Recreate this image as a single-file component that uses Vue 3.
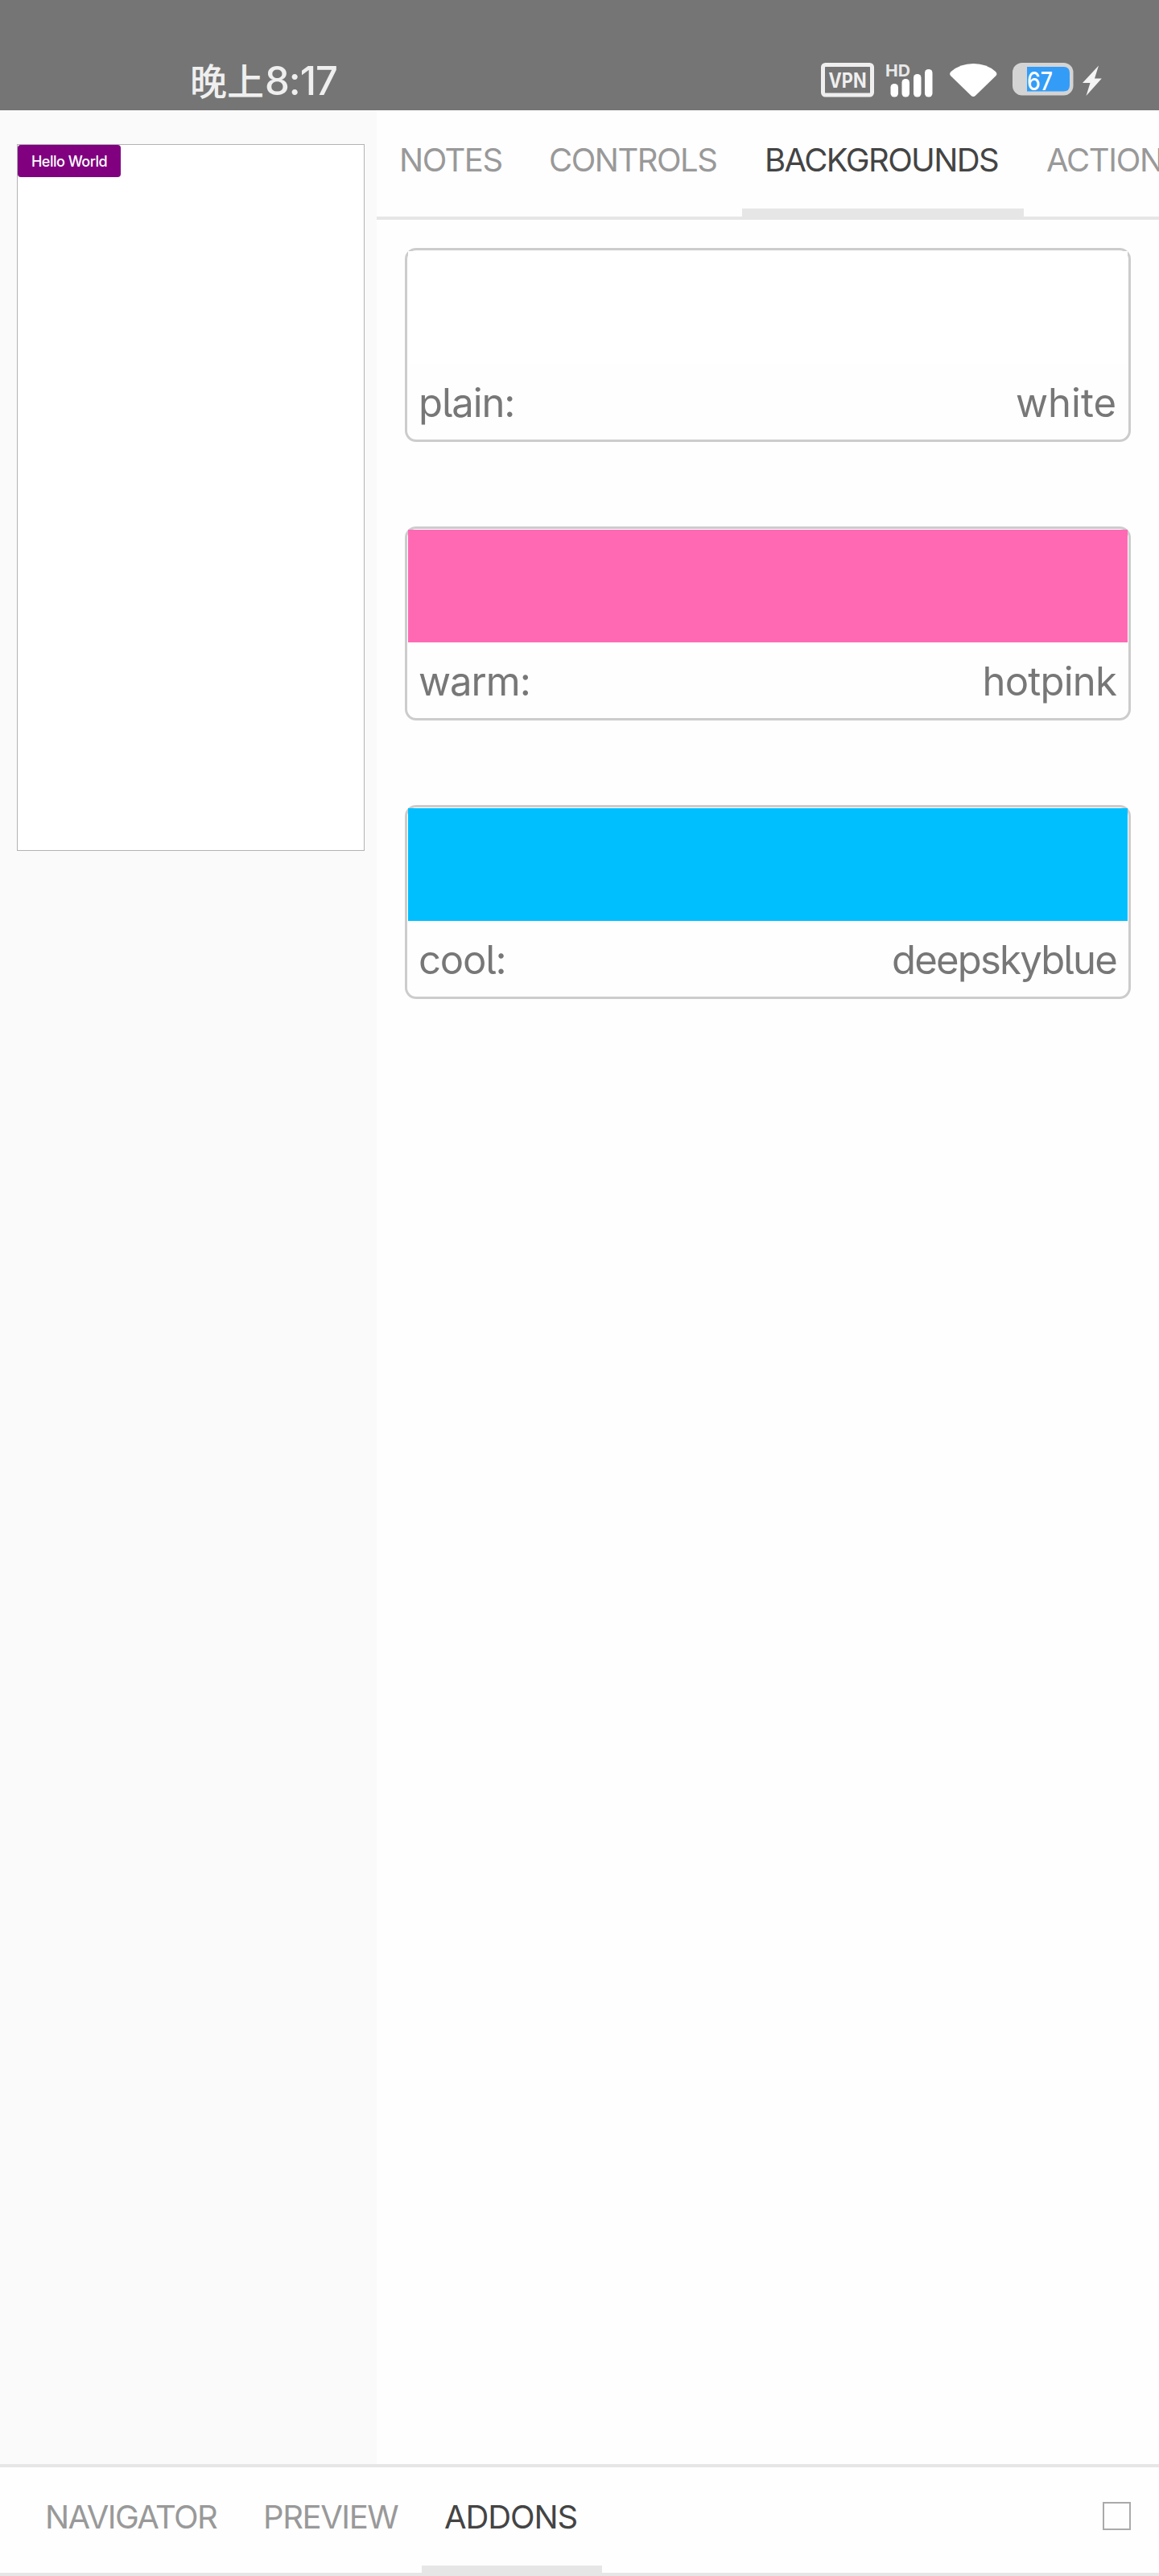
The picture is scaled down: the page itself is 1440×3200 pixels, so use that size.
<script setup>
const panels = [
  { label: 'NOTES', width: 186, spacing: -1.5 },
  { label: 'CONTROLS', width: 268, spacing: -1.5 },
  { label: 'BACKGROUNDS', width: 350, spacing: -1.6, active: true },
  { label: 'ACTIONS', width: 230, spacing: -1.3 },
]

const backgrounds = [
  { name: 'plain', value: 'white', nameSpacing: -1.1, valueSpacing: 0 },
  { name: 'warm', value: 'hotpink', nameSpacing: -1, valueSpacing: -0.8 },
  { name: 'cool', value: 'deepskyblue', nameSpacing: -1.2, valueSpacing: -1.8 },
]

const views = [
  { label: 'NAVIGATOR', width: 271, spacing: -1.6 },
  { label: 'PREVIEW', width: 225, spacing: -1.4 },
  { label: 'ADDONS', width: 224, spacing: -1.1, active: true },
]
</script>

<template>
  <div class="screen">
    <header class="status">
      <div class="clock"><span class="period">晚上</span><span class="time">8:17</span></div>
      <svg class="indicators" width="360" height="60" viewBox="1016 70 360 60">
        <rect x="1022.5" y="80.5" width="61" height="37.5" rx="3" fill="none" stroke="#efefef" stroke-width="5" />
        <text x="1029.5" y="108.5" font-size="25" font-weight="700" fill="#efefef" textLength="47" lengthAdjust="spacingAndGlyphs">VPN</text>
        <text x="1100" y="94.5" font-size="20.5" font-weight="700" fill="#e8e8e8" textLength="31" lengthAdjust="spacingAndGlyphs">HD</text>
        <g fill="#fff">
          <rect x="1106.5" y="104" width="9.5" height="16.5" rx="4.5" />
          <rect x="1120.5" y="98" width="9.5" height="22.5" rx="4.5" />
          <rect x="1135" y="92" width="9.5" height="28.5" rx="4.5" />
          <rect x="1149" y="86" width="9.5" height="34.5" rx="4.5" />
          <path d="M1181 94 Q1179 91.500 1181.500 89 Q1193 79 1209.500 79 Q1226 79 1237 89 Q1239.500 91.500 1237.500 94 L1212 118.800 Q1209.300 121.300 1206.500 118.800 Z" />
        </g>
        <rect x="1258" y="78" width="75.500" height="40.500" rx="12" fill="#d4d4d4" />
        <path d="M1276 83 H1321.500 Q1329 83 1329 90.500 V106 Q1329 113.500 1321.500 113.500 H1276 Z" fill="#339cf7" />
        <text x="1276" y="111.500" font-size="31" font-weight="500" fill="#fff" textLength="32" lengthAdjust="spacingAndGlyphs">67</text>
        <path d="M1365 81.500 L1345 103 H1354.500 L1349.500 119 L1368.800 97.500 H1360 Z" fill="#f4f4f4" />
      </svg>
    </header>

    <main class="body">
      <aside class="preview">
        <div class="canvas">
          <button class="hello">Hello World</button>
        </div>
      </aside>

      <section class="addons">
        <nav class="tabs">
          <div v-for="tab in panels" :key="tab.label" class="tab" :class="{ active: tab.active }" :style="{ width: tab.width + 'px', letterSpacing: tab.spacing + 'px' }">{{ tab.label }}</div>
        </nav>
        <div class="list">
          <article v-for="bg in backgrounds" :key="bg.name" class="card">
            <div class="swatch" :style="{ background: bg.value }"></div>
            <div class="caption">
              <span :style="{ letterSpacing: bg.nameSpacing + 'px' }">{{ bg.name }}:</span>
              <span :style="{ letterSpacing: bg.valueSpacing + 'px' }">{{ bg.value }}</span>
            </div>
          </article>
        </div>
      </section>
    </main>

    <footer class="bottom">
      <div v-for="view in views" :key="view.label" class="tab" :class="{ active: view.active }" :style="{ width: view.width + 'px', letterSpacing: view.spacing + 'px' }">{{ view.label }}</div>
      <i class="square"></i>
    </footer>
  </div>
</template>

<style>
body {
  margin: 0;
  background: #fff;
}
</style>

<style scoped>
.screen,
.screen * {
  box-sizing: border-box;
}
.screen {
  width: 1440px;
  height: 3200px;
  display: flex;
  flex-direction: column;
  overflow: hidden;
  background: #fefefe;
  font-family: Inter, "Noto Sans CJK SC", sans-serif;
}
.status {
  flex: none;
  height: 137px;
  padding: 70px 64px 0 236px;
  display: flex;
  justify-content: space-between;
  background: #757575;
}
.clock {
  display: flex;
  color: #efefef;
  font-weight: 500;
  white-space: nowrap;
}
.period {
  width: 93px;
  font-family: "Noto Sans CJK SC", sans-serif;
  font-size: 46px;
  line-height: 56px;
}
.time {
  font-size: 49px;
  line-height: 62px;
  letter-spacing: -1px;
}
.body {
  flex: 1;
  min-height: 0;
  display: flex;
}
.preview {
  flex: none;
  width: 468px;
  padding: 42px 15px 0 21px;
  background: #fafafa;
}
.canvas {
  height: 878px;
  display: flex;
  align-items: flex-start;
  border: 1px solid #b3b3b3;
  background: #fff;
}
.hello {
  width: 128px;
  height: 40px;
  padding: 0;
  border: 0;
  border-radius: 4px;
  background: #800080;
  color: #fff;
  font: 500 18px/41px Inter, sans-serif;
  letter-spacing: -0.5px;
  white-space: nowrap;
}
.addons {
  flex: 1;
  min-width: 0;
}
.tabs {
  height: 136px;
  display: flex;
  overflow: hidden;
  border-bottom: 4px solid #e6e6e6;
}
.tab {
  flex: none;
  padding: 0 28px;
  border-bottom: 10px solid transparent;
  font-size: 40px;
  font-weight: 400;
  line-height: 124px;
  white-space: nowrap;
  color: #999;
}
.tab.active {
  border-bottom-color: #e6e6e6;
  color: #444;
}
.list {
  padding: 35px 35px 0;
  display: flex;
  flex-direction: column;
  gap: 105px;
}
.card {
  height: 241px;
  padding: 1px;
  border: 3px solid #ccc;
  border-radius: 14px;
}
.swatch {
  height: 140px;
}
.caption {
  padding: 0 14px 0 13px;
  display: flex;
  justify-content: space-between;
  font-size: 49px;
  font-weight: 400;
  line-height: 98px;
  height: 94px;
  font-feature-settings: "cv05";
  color: #777;
}
.bottom {
  flex: none;
  height: 139px;
  padding: 0 35px 0 28px;
  display: flex;
  border-top: 4px solid #e6e6e6;
  border-bottom: 4px solid #e6e6e6;
}
.bottom .tab {
  height: 131px;
  border-bottom-width: 9px;
}
.square {
  width: 35px;
  height: 35px;
  margin: 43px 0 0 auto;
  border: 2px solid #aaa;
}
</style>
